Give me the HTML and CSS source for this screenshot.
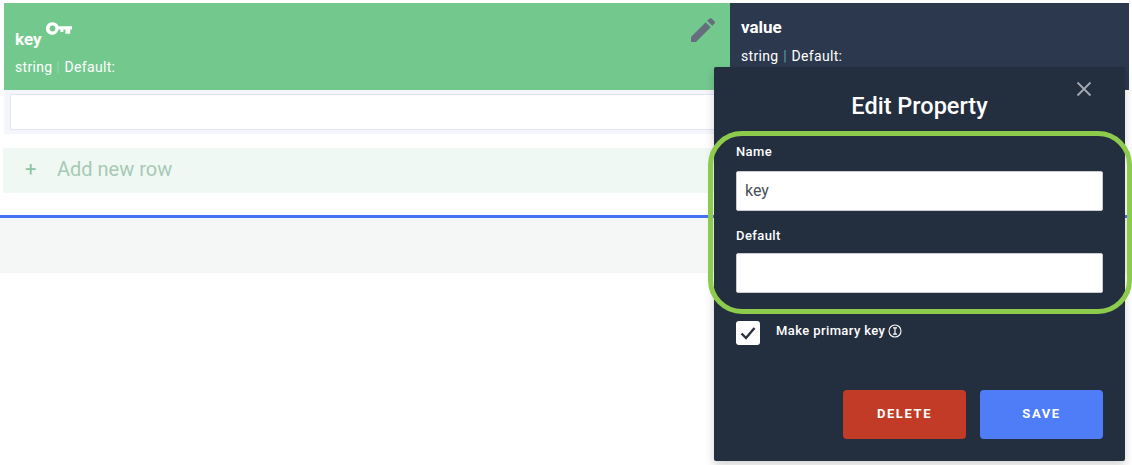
FILE: index.html
```html
<!DOCTYPE html>
<html lang="en">
<head>
    <meta charset="UTF-8">
    <title>Edit Property</title>
    <link rel="stylesheet" href="styles.css">
</head>
<body>
    <div class="table-head">
        <div class="col col-key">
            <div class="col-name">key
                <svg class="key-icon" width="26" height="14" viewBox="0 0 26 14"><path fill="#fff" fill-rule="evenodd" d="M6.5 0.200a6.300 6.300 0 0 1 5.900 4H26v3.400h-1.800v4.200h-4.800V7.600h-2v2.400h-3V7.600h-2A6.300 6.300 0 1 1 6.500 0.200zm0 3.400a2.900 2.900 0 1 0 0 5.800 2.900 2.900 0 0 0 0-5.800z"/></svg>
            </div>
            <div class="col-meta">string <span class="sep">|</span> Default:</div>
            <svg class="edit-icon" width="32" height="32" viewBox="0 0 24 24"><path fill="#666e7d" d="M3 17.250V21h3.750L17.810 9.940l-3.750-3.750L3 17.250zM20.710 7.040a1 1 0 0 0 0-1.410l-2.340-2.340a1 1 0 0 0-1.410 0l-1.830 1.830 3.750 3.750 1.830-1.830z"/></svg>
        </div>
        <div class="col col-value">
            <div class="col-name">value</div>
            <div class="col-meta">string <span class="sep">|</span> Default:</div>
        </div>
    </div>
    <div class="cell-row"><div class="cell-input"></div></div>
    <div class="add-row"><span class="plus">+</span>Add new row</div>
    <div class="footer-band"></div>

    <div class="modal">
        <svg class="close-icon" width="16" height="16" viewBox="0 0 16 16"><path stroke="#a4a9b2" stroke-width="1.800" d="M1.500 1.500l13 13M14.500 1.500l-13 13"/></svg>
        <h2>Edit Property</h2>
        <label>Name</label>
        <div class="field">key</div>
        <label>Default</label>
        <div class="field"></div>
        <div class="primary">
            <span class="checkbox">
                <svg width="18" height="16" viewBox="0 0 18 16"><path fill="none" stroke="#2a3140" stroke-width="2.400" d="M2.500 8.500l4.500 4.500 8.500-10"/></svg>
            </span>
            <span class="primary-label">Make primary key
                <svg class="info-icon" width="14" height="14" viewBox="0 0 14 14"><circle cx="7" cy="7" r="6" fill="none" stroke="#fff" stroke-width="1.100"/><path stroke="#fff" stroke-width="1.200" d="M5 3.800h4M7 3.800v6.400M5 10.200h4"/></svg>
            </span>
        </div>
        <div class="actions">
            <button class="btn btn-delete">DELETE</button>
            <button class="btn btn-save">SAVE</button>
        </div>
    </div>
    <div class="highlight"></div>
</body>
</html>
```

FILE: styles.css
```css
html, body { height: 100%; }
body { margin: 0; padding-top: 3px; box-sizing: border-box; background: #fff; font-family: Roboto, Arial, sans-serif; overflow: hidden; position: relative; }
.table-head { display: flex; margin-left: 4px; margin-right: 3px; height: 87px; }
.col { box-sizing: border-box; color: #fff; position: relative; }
.col-key { width: 726px; background: #73c98d; padding: 15px 11px; }
.col-value { flex: 1; background: #2c384e; padding: 14px 11px; }
.col-name { font-size: 17px; font-weight: 700; line-height: 20px; }
.col-key .col-name { padding-top: 11px; box-sizing: border-box; height: 36px; }
.col-meta { font-size: 14px; letter-spacing: 0.3px; line-height: 16px; margin-top: 11px; }
.col-key .col-meta { margin-top: 5px; }
.sep { color: #5c9fb0; margin: 0 1px; }
.col-key .sep { color: #8fd4a6; margin: 0 1px 0 0; }
.key-icon { position: absolute; left: 42px; top: 19px; }
.edit-icon { position: absolute; left: 683px; top: 11px; }
.cell-row { margin-left: 4px; width: 726px; height: 44px; background: #f5f6fb; padding: 4px 0 0 6px; box-sizing: border-box; }
.cell-input { height: 36px; background: #fff; border: 1px solid #e1e5f2; border-radius: 2px; box-sizing: border-box; }
.add-row { margin: 14px 0 0 3px; width: 727px; height: 45px; background: #eff8f3; color: #a8c9b6; font-size: 20px; line-height: 43px; box-sizing: border-box; padding-left: 22px; }
.plus { display: inline-block; width: 32px; color: #8cc5a1; }
.footer-band { margin-top: 22px; height: 55px; background: #f5f7f6; border-top: 3px solid #4472f5; }
.modal { position: absolute; left: 714px; top: 67px; width: 411px; height: 394px; box-sizing: border-box; background: #232e3f; border-radius: 2px; padding: 0 22px; color: #fff; box-shadow: 0 4px 10px rgba(0, 0, 0, 0.18); }
.close-icon { position: absolute; left: 362px; top: 14px; }
.modal h2 { margin: 26px 0 0; font-size: 23.5px; font-weight: 500; line-height: 27px; text-align: center; height: 38px; }
.modal label { display: block; font-size: 13px; font-weight: 500; letter-spacing: 0.4px; line-height: 16px; height: 27px; margin-top: 13px; }
.modal .field + label { margin-top: 17px; height: 25px; }
.field { height: 40px; background: #fff; border-radius: 2px; border: 1px solid #c9ccd2; box-sizing: border-box; color: #4a4f59; font-size: 16px; line-height: 38px; padding-left: 8px; }
.primary { display: flex; margin-top: 28px; height: 24px; }
.checkbox { width: 24px; height: 24px; background: #fff; border-radius: 3px; display: flex; align-items: center; justify-content: center; }
.primary-label { margin-left: 16px; font-size: 13px; font-weight: 500; letter-spacing: 0.4px; line-height: 18px; display: flex; align-items: center; height: 20px; gap: 3px; }
.actions { display: flex; justify-content: flex-end; gap: 14px; margin-top: 45px; }
.btn { width: 123px; height: 49px; border: none; border-radius: 4px; color: #fff; font-family: Roboto, Arial, sans-serif; font-size: 13px; font-weight: 700; letter-spacing: 1.6px; padding-bottom: 3px; }
.btn-delete { background: #c13b26; }
.btn-save { background: #4f7cf7; }
.highlight { position: absolute; left: 708px; top: 131px; width: 424px; height: 183px; box-sizing: border-box; border: 5px solid #8ccb4c; border-radius: 34px; }
```
